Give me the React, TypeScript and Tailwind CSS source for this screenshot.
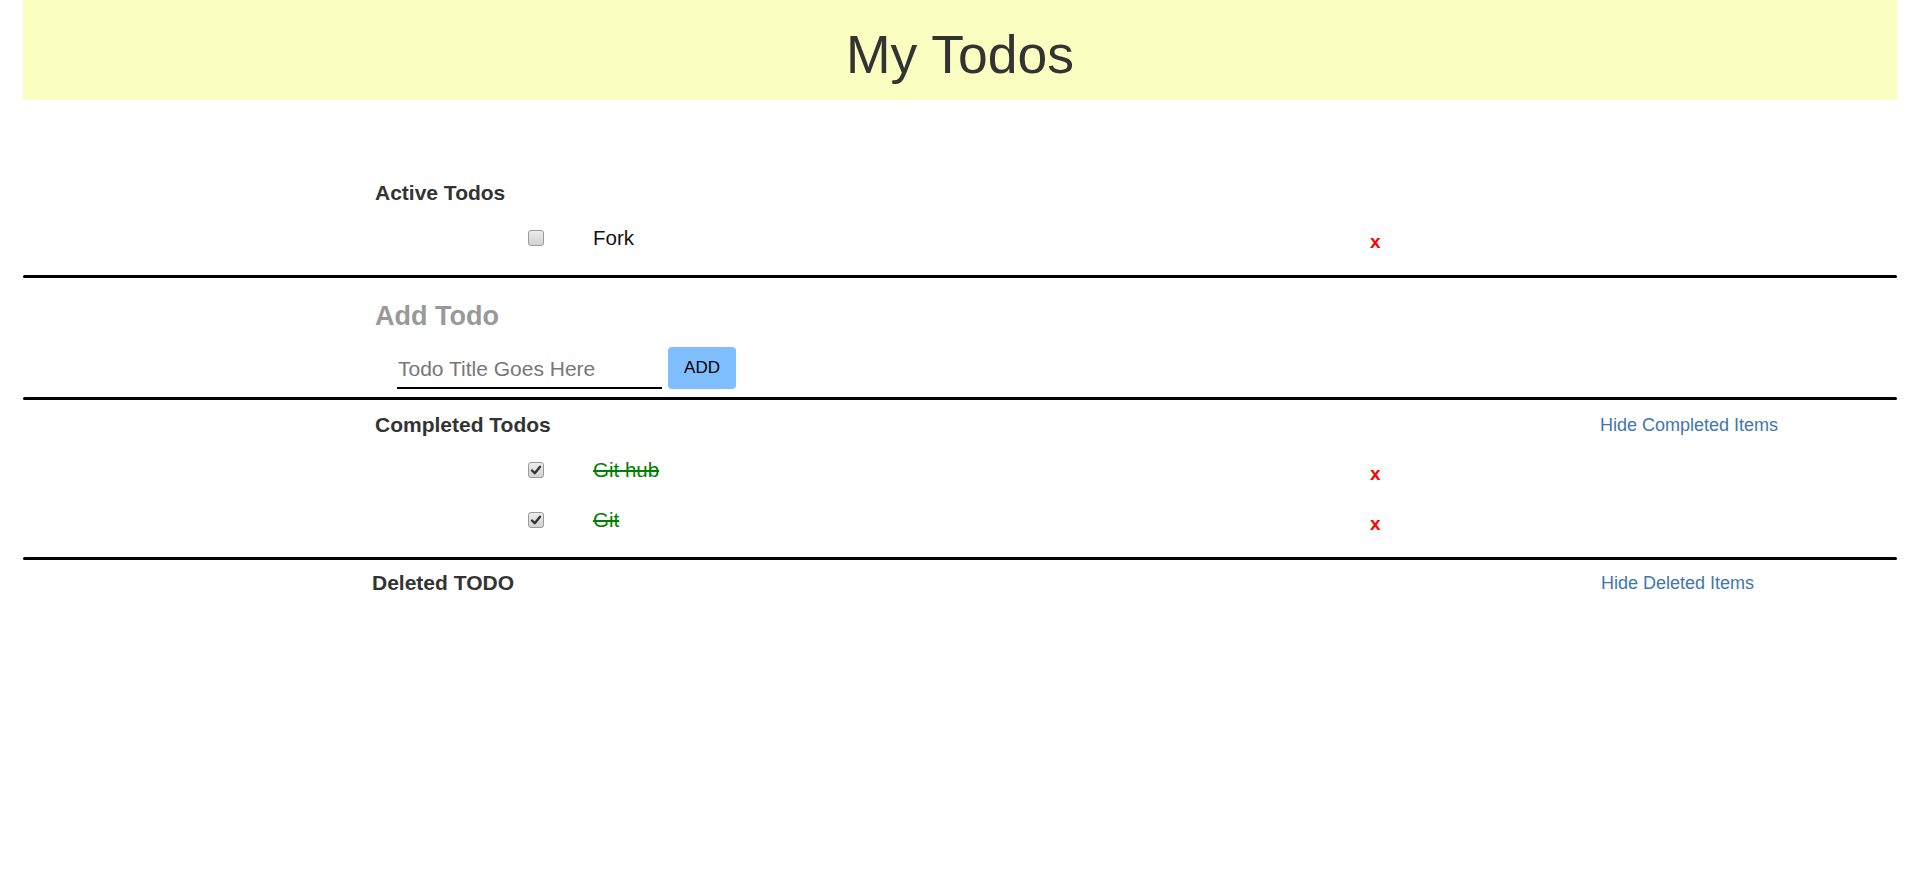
import React from "react";

function Box({ checked }: { checked?: boolean }) {
  return (
    <div className="w-[16px] h-[16px] rounded-[3px] border border-[#9a9a9a] bg-gradient-to-b from-[#ececec] to-[#d2d2d2] flex items-center justify-center">
      {checked && (
        <svg width="12" height="12" viewBox="0 0 12 12">
          <path d="M2 6.5 L4.8 9.2 L10 2.8" fill="none" stroke="#333" strokeWidth="2.4" strokeLinecap="round" strokeLinejoin="round" />
        </svg>
      )}
    </div>
  );
}

function Item({ title, done }: { title: string; done?: boolean }) {
  return (
    <div className="flex items-center h-[40px]">
      <div className="w-[528px] shrink-0" />
      <Box checked={done} />
      <div className="w-[49px] shrink-0" />
      <div
        className={
          done
            ? "w-[777px] shrink-0 text-[20.5px] text-[#008000] line-through"
            : "w-[777px] shrink-0 text-[20.5px] text-[#111]"
        }
      >
        {title}
      </div>
      <span className="pt-[7px] text-[19px] font-bold text-[#f00] leading-none">x</span>
    </div>
  );
}

function Rule() {
  return <div className="mx-[23px] h-[3px] bg-black rounded-full" />;
}

export default function App() {
  return (
    <div className="min-h-[877px] bg-white font-['Liberation_Sans',Arial,sans-serif] text-[#333]">
      <header className="mx-[23px] h-[100px] bg-[#fafec1] text-center text-[53.5px] leading-[60px] pt-[25px] text-[#333]">
        My Todos
      </header>

      <div className="h-[70px]" />
      <div className="h-[46px] flex items-center pl-[375px] text-[21px] font-bold text-[#333]">Active Todos</div>
      <div className="pt-[2px]">
        <Item title="Fork" />
      </div>
      <div className="h-[17px]" />
      <Rule />

      <div className="h-[19px]" />
      <div className="h-[39px] flex items-center pl-[375px] text-[27px] font-bold text-[#999]">Add Todo</div>
      <div className="pt-[11px] h-[61px] flex items-start pl-[397px] gap-[6px]">
        <input
          placeholder="Todo Title Goes Here"
          className="w-[265px] h-[42px] border-b-2 border-black pl-[1px] pt-[4px] text-[21px] outline-none placeholder:text-[#777] bg-transparent"
        />
        <button className="w-[68px] h-[42px] rounded-[4px] bg-[#80bfff] text-[17px] text-black">ADD</button>
      </div>
      <Rule />

      <div className="h-[50px] flex items-center pl-[375px]">
        <div className="w-[1225px] shrink-0 text-[21px] font-bold text-[#333]">Completed Todos</div>
        <a className="text-[18px] text-[#3f76ad]">Hide Completed Items</a>
      </div>
      <Item title="Git hub" done />
      <div className="h-[10px]" />
      <Item title="Git" done />
      <div className="h-[17px]" />
      <Rule />

      <div className="h-[46px] flex items-center pl-[372px]">
        <div className="w-[1229px] shrink-0 text-[21px] font-bold text-[#333]">Deleted TODO</div>
        <a className="text-[18px] text-[#3f76ad]">Hide Deleted Items</a>
      </div>
    </div>
  );
}
